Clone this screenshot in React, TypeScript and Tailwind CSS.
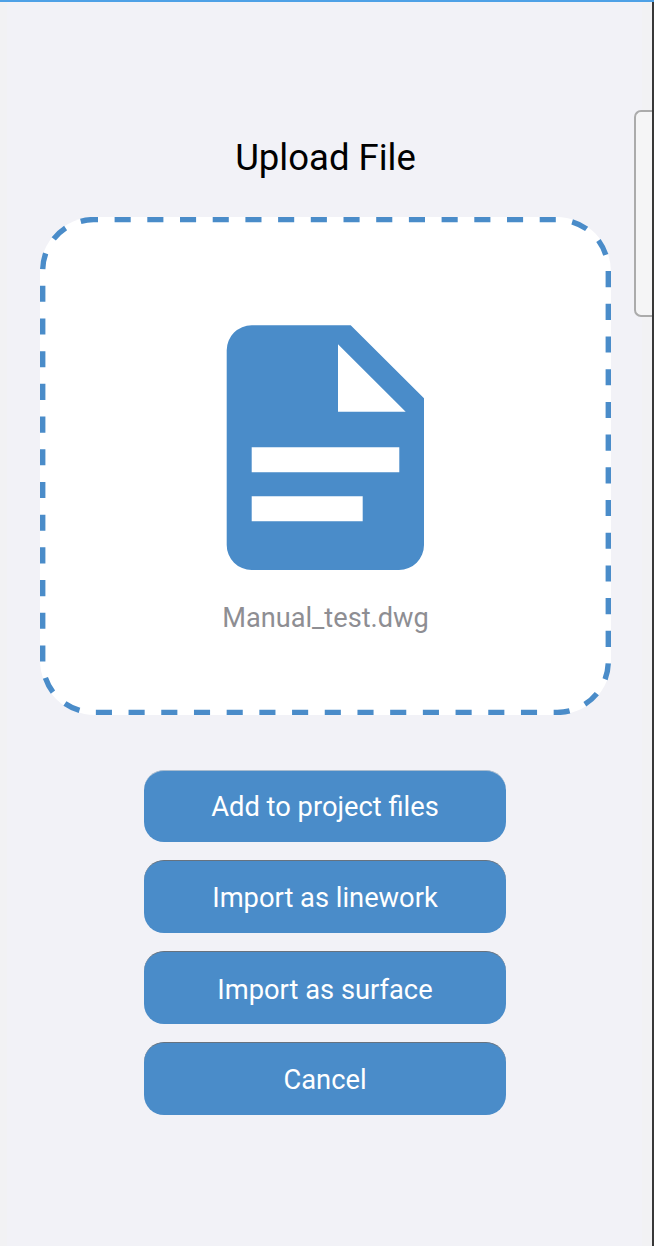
export default function App() {
  const buttons = [
    { label: "Add to project files", cls: "h-[72px] border-t-[#a9bccf]" },
    { label: "Import as linework", cls: "h-[73px] pt-[2px] border-t-[#66727f]" },
    { label: "Import as surface", cls: "h-[73px] pt-[3px] border-t-[#66727f]" },
    { label: "Cancel", cls: "h-[73px] pt-[2px] border-t-[#66727f]" },
  ];
  return (
    <div className="relative w-[654px] h-[1246px] overflow-hidden bg-[#f2f2f7] font-['Roboto',sans-serif]">
      <div className="absolute left-0 top-0 bottom-0 w-[7px] bg-[#f2f2f4]" />
      <div className="absolute right-[2px] top-0 bottom-0 w-[10px] bg-[#f2f2f4]" />
      <div className="absolute right-[2px] top-[110px] w-[18px] h-[207px] bg-[#f5f5f6] border-2 border-r-0 border-[#ababab] rounded-l-[7px]" />
      <div className="absolute right-0 top-0 bottom-0 w-[2px] bg-[#383838]" />
      <div className="absolute left-0 right-0 top-0 h-[2px] bg-[#4ea1e6]" />
      <div className="flex flex-col items-center w-[651px] pl-[40px] pr-[40px] pt-[137px]">
        <h1 className="text-[36.5px] leading-[42px] font-normal text-black">Upload File</h1>
        <div className="relative mt-[38px] w-[571px] h-[498px] bg-white rounded-[55px] flex flex-col items-center pt-[108px]">
          <svg className="absolute inset-0" width="571" height="498" viewBox="0 0 571 498" fill="none">
            <rect
              x="2.7"
              y="2.6"
              width="565.6"
              height="492.8"
              rx="51"
              stroke="#4a8cc9"
              strokeWidth="5.4"
              strokeDasharray="16.1 16.6"
              strokeDashoffset="11.8"
            />
          </svg>
          <svg width="198" height="246" viewBox="0 0 198 246" className="relative block ml-[-1px]">
            <path
              fillRule="evenodd"
              fill="#4a8cc9"
              d="M25.7 .3H124.7L198 73.3V220A25 25 0 0 1 173 245H25.7A25 25 0 0 1 .7 220V25.3A25 25 0 0 1 25.7 .3ZM112 19.3V86.7H179.7ZM25.7 122.3V147.3H173.3V122.3ZM25.7 171.3V196.3H136.7V171.3Z"
            />
          </svg>
          <p className="relative mt-[31px] text-[27.2px] leading-[32px] text-[#8e8e93]">Manual_test.dwg</p>
        </div>
        <div className="mt-[55px] mr-[1px] flex flex-col gap-[18px]">
          {buttons.map((b) => (
            <button
              key={b.label}
              className={`w-[362px] rounded-[20px] border-t bg-[#4a8cc9] text-white text-[27.3px] leading-[32px] flex items-center justify-center ${b.cls}`}
            >
              {b.label}
            </button>
          ))}
        </div>
      </div>
    </div>
  );
}
